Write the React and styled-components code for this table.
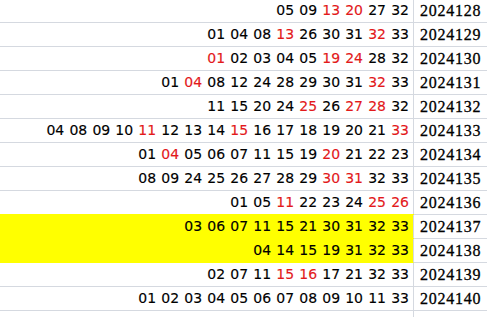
import React from "react";
import styled, { createGlobalStyle } from "styled-components";

const GlobalStyle = createGlobalStyle`
  html, body {
    margin: 0;
    padding: 0;
    background: #fff;
  }
`;

// numbers marked with * are drawn in red
const rows = [
  { nums: "05 09 *13 *20 27 32", issue: "2024128" },
  { nums: "01 04 08 *13 26 30 31 *32 33", issue: "2024129" },
  { nums: "*01 02 03 04 05 *19 *24 28 32", issue: "2024130" },
  { nums: "01 *04 08 12 24 28 29 30 31 *32 33", issue: "2024131" },
  { nums: "11 15 20 24 *25 26 *27 *28 32", issue: "2024132" },
  { nums: "04 08 09 10 *11 12 13 14 *15 16 17 18 19 20 21 *33", issue: "2024133" },
  { nums: "01 *04 05 06 07 11 15 19 *20 21 22 23", issue: "2024134" },
  { nums: "08 09 24 25 26 27 28 29 *30 *31 32 33", issue: "2024135" },
  { nums: "01 05 *11 22 23 24 *25 *26", issue: "2024136" },
  { nums: "03 06 07 11 15 21 30 31 32 33", issue: "2024137", mark: true },
  { nums: "04 14 15 19 31 32 33", issue: "2024138", mark: true },
  { nums: "02 07 11 *15 *16 17 21 32 33", issue: "2024139" },
  { nums: "01 02 03 04 05 06 07 08 09 10 11 33", issue: "2024140" },
  { nums: "", issue: "" },
];

function Sheet() {
  return (
    <Viewport>
      <Grid>
        {rows.map((row, i) => (
          <Row key={i}>
            <NumCell $mark={row.mark}>
              {row.nums.split(" ").filter(Boolean).map((n, j) => (
                <React.Fragment key={j}>
                  {j > 0 && " "}
                  {n.startsWith("*") ? <Hot>{n.slice(1)}</Hot> : n}
                </React.Fragment>
              ))}
            </NumCell>
            <IssueCell>{row.issue}</IssueCell>
          </Row>
        ))}
      </Grid>
    </Viewport>
  );
}

export default function App() {
  return (
    <>
      <GlobalStyle />
      <Sheet />
    </>
  );
}

const Viewport = styled.div`
  width: 487px;
  height: 317px;
  overflow: hidden;
  background: #fff;
`;

const Grid = styled.div`
  display: flex;
  flex-direction: column;
  margin-top: -1px;
`;

const Row = styled.div`
  display: grid;
  grid-template-columns: 414px 1fr;
  height: 24px;
`;

const NumCell = styled.div`
  box-sizing: border-box;
  height: 24px;
  line-height: 23px;
  padding-right: 4px;
  text-align: right;
  white-space: nowrap;
  font-family: "DejaVu Sans", Verdana, sans-serif;
  font-size: 14px;
  word-spacing: 0.7px;
  color: #000;
  -webkit-text-stroke: 0.15px #000;
  border-right: 1px solid #d5d9e0;
  border-bottom: 1px solid ${(p) => (p.$mark ? "#ffff00" : "#d5d9e0")};
  background: ${(p) => (p.$mark ? "#ffff00" : "#fff")};
  box-shadow: ${(p) => (p.$mark ? "0 -1px 0 #ffff00" : "none")};
`;

const IssueCell = styled.div`
  box-sizing: border-box;
  height: 24px;
  line-height: 23px;
  padding-left: 6px;
  white-space: nowrap;
  font-family: "Liberation Serif", "Times New Roman", serif;
  font-size: 16px;
  letter-spacing: 0.75px;
  color: #000;
  -webkit-text-stroke: 0.3px #000;
  border-bottom: 1px solid #d5d9e0;
`;

const Hot = styled.span`
  color: #e3191b;
  -webkit-text-stroke-color: #e3191b;
`;
